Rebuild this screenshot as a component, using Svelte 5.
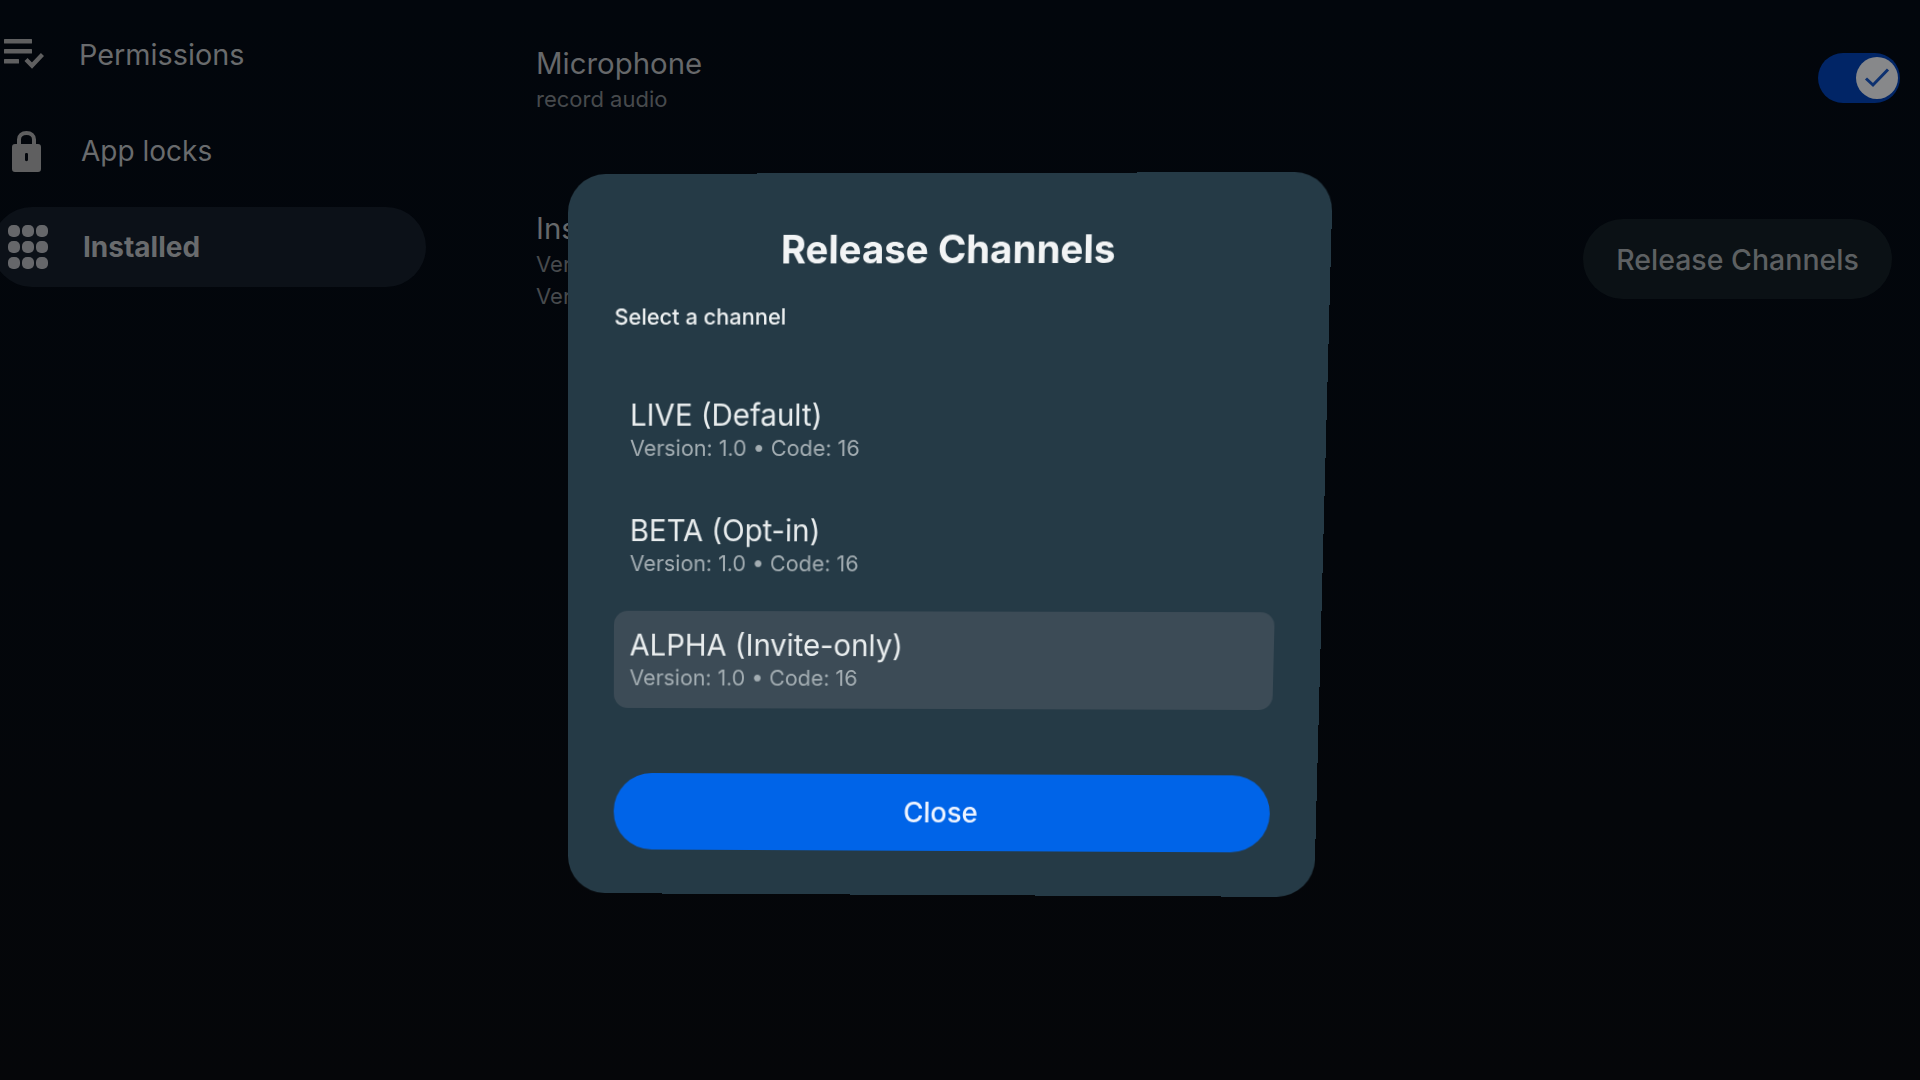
<script lang="ts">
	const navItems = [
		{ label: 'Permissions', icon: 'checklist' },
		{ label: 'App locks', icon: 'lock' },
		{ label: 'Installed', icon: 'grid', active: true }
	];

	const channels = [
		{ name: 'LIVE (Default)', version: '1.0', code: 16 },
		{ name: 'BETA (Opt-in)', version: '1.0', code: 16 },
		{ name: 'ALPHA (Invite-only)', version: '1.0', code: 16, selected: true }
	];

	// the dialog is a bit keystoned in the capture, so map its box onto the measured corners
	function warp(w: number, h: number, [p0, p1, p2, p3]: number[][]) {
		const dx1 = p1[0] - p2[0], dx2 = p3[0] - p2[0], dx3 = p0[0] - p1[0] + p2[0] - p3[0];
		const dy1 = p1[1] - p2[1], dy2 = p3[1] - p2[1], dy3 = p0[1] - p1[1] + p2[1] - p3[1];
		const det = dx1 * dy2 - dx2 * dy1;
		const g = (dx3 * dy2 - dx2 * dy3) / det;
		const k = (dx1 * dy3 - dx3 * dy1) / det;
		const a = p1[0] - p0[0] + g * p1[0];
		const b = p3[0] - p0[0] + k * p3[0];
		const d = p1[1] - p0[1] + g * p1[1];
		const e = p3[1] - p0[1] + k * p3[1];
		return `matrix3d(${a / w},${d / w},0,${g / w},${b / h},${e / h},0,${k / h},0,0,1,0,${p0[0]},${p0[1]},0,1)`;
	}

	const dialogTransform = warp(764, 720, [[0, 1], [765, -1], [746, 724], [0, 720]]);
</script>

<div class="page">
	<nav class="sidebar">
		{#each navItems as item}
			<div class="nav-item" class:active={item.active}>
				<span class="nav-icon">
					{#if item.icon === 'checklist'}
						<svg width="44" height="32" viewBox="0 0 44 32" fill="none">
							<g fill="#5f5f60">
								<rect x="4" y="1" width="28" height="4.5" rx="0.5" />
								<rect x="4" y="11" width="28" height="4.5" rx="0.5" />
								<rect x="4" y="21" width="15" height="4.5" rx="0.5" />
							</g>
							<path d="M26 21.5 L32 27.5 L42.5 16.5" stroke="#5f5f60" stroke-width="4.4" />
						</svg>
					{:else if item.icon === 'lock'}
						<svg class="lock" width="44" height="46" viewBox="0 0 44 46" fill="none">
							<path d="M19 18 V12.5 C19 8.5 22 6 26.5 6 C31 6 34 8.5 34 12.5 V18" stroke="#5f5f60" stroke-width="4" />
							<path fill="#5f5f60" fill-rule="evenodd" d="M15 17 H38 C40 17 41 18 41 20 V42 C41 44 40 45 38 45 H15 C13 45 12 44 12 42 V20 C12 18 13 17 15 17 Z M25 27 V33 C25 34.5 28 34.5 28 33 V27 C28 25.5 25 25.5 25 27 Z" />
						</svg>
					{:else}
						<div class="dots">
							{#each Array(9) as _}
								<span></span>
							{/each}
						</div>
					{/if}
				</span>
				<span class="nav-label">{item.label}</span>
			</div>
		{/each}
	</nav>

	<main class="content">
		<section class="row mic">
			<div>
				<div class="row-title">Microphone</div>
				<div class="row-sub">record audio</div>
			</div>
			<div class="toggle">
				<span class="knob">
					<svg width="28" height="24" viewBox="0 0 28 24" fill="none">
						<path d="M3 12.5 L10 19 L25 3.5" stroke="#0d3170" stroke-width="3" />
					</svg>
				</span>
			</div>
		</section>

		<section class="row installed">
			<div>
				<div class="row-title">Installed</div>
				<div class="row-sub">Version: 1.0</div>
				<div class="row-sub">Version code: 16</div>
			</div>
			<button type="button" class="channels-btn">Release Channels</button>
		</section>
	</main>
</div>

<div class="overlay">
	<div class="dialog" style="transform: {dialogTransform}">
		<h2 class="dialog-title">Release Channels</h2>
		<p class="dialog-hint">Select a channel</p>
		<ul class="channel-list">
			{#each channels as channel}
				<li class="channel" class:selected={channel.selected}>
					<div class="channel-name">{channel.name}</div>
					<div class="channel-meta">Version: {channel.version} • Code: {channel.code}</div>
				</li>
			{/each}
		</ul>
		<button type="button" class="close-btn">Close</button>
	</div>
</div>

<style>
	:global(body) {
		background: #03060b;
		overflow: hidden;
	}

	.page {
		display: flex;
		width: 1920px;
		height: 1080px;
		background: linear-gradient(180deg, #02060c 0%, #03060b 50%, #050609 100%);
		color: #67696b;
		font-family: Inter, "Noto Sans", sans-serif;
	}

	.sidebar {
		width: 426px;
		flex-shrink: 0;
		display: flex;
		flex-direction: column;
		gap: 16px;
		padding-top: 14px;
	}

	.nav-item {
		display: flex;
		align-items: center;
		height: 80px;
		font-size: 28.8px;
		color: #696b6d;
	}

	.nav-item:first-child {
		margin-bottom: 2px;
	}

	.nav-item:nth-child(2) {
		font-size: 28px;
		margin-top: -1px;
	}

	.nav-item.active {
		margin-left: -8px;
		padding-left: 8px;
		background: #0c1118;
		border-radius: 40px;
		font-size: 28px;
		font-weight: 700;
	}

	.nav-icon {
		width: 79px;
		display: flex;
		flex-shrink: 0;
	}

	.nav-item:nth-child(2) .nav-icon {
		width: 81px;
	}

	.nav-item.active .nav-icon {
		width: 83px;
	}

	.lock {
		margin-top: -2px;
	}

	.dots {
		display: grid;
		grid-template-columns: repeat(3, 12px);
		gap: 4px 2px;
		margin-left: 8px;
	}

	.dots span {
		height: 12px;
		border-radius: 5px;
		background: #66676a;
	}

	.content {
		flex: 1;
		padding: 45px 28px 0 110px;
	}

	.row {
		display: flex;
		justify-content: space-between;
	}

	.row.mic {
		align-items: flex-start;
		height: 165px;
	}

	.row.installed {
		align-items: flex-start;
	}

	.row-title {
		font-size: 29.4px;
		line-height: 38px;
		color: #66686a;
	}

	.row-sub {
		font-size: 22px;
		line-height: 32px;
		color: #474a4d;
	}

	.toggle {
		width: 82px;
		height: 50px;
		margin-top: 8px;
		margin-right: -8px;
		border-radius: 25px;
		background: #012566;
		display: flex;
		justify-content: flex-end;
		align-items: center;
		padding-right: 2px;
		box-sizing: border-box;
	}

	.knob {
		width: 42px;
		height: 42px;
		border-radius: 50%;
		background: #87888a;
		display: grid;
		place-items: center;
	}

	.channels-btn {
		width: 309px;
		height: 80px;
		margin-top: 9px;
		border: 0;
		border-radius: 40px;
		background: #0b1115;
		color: #5d6062;
		font: 500 28.5px Inter, "Noto Sans", sans-serif;
	}

	.overlay {
		position: fixed;
		inset: 0;
		padding: 173px 0 0 568px;
		font-family: Inter, "Noto Sans", sans-serif;
	}

	.dialog {
		width: 764px;
		height: 720px;
		box-sizing: border-box;
		padding: 50px 47px 0;
		background: #253a46;
		border-radius: 38px;
		transform-origin: 0 0;
		display: flex;
		flex-direction: column;
	}

	.dialog-title {
		margin: 0;
		text-align: center;
		font-size: 38.5px;
		line-height: 48px;
		font-weight: 700;
		color: #f2f4f5;
	}

	.dialog-hint {
		margin: 28px 0 0;
		font-size: 22px;
		line-height: 28px;
		font-weight: 500;
		color: #eef1f2;
	}

	.channel-list {
		list-style: none;
		margin: 49px 0 0;
		padding: 0;
		display: flex;
		flex-direction: column;
		gap: 17px;
	}

	.channel {
		height: 98px;
		box-sizing: border-box;
		padding: 16px 16px 0;
		border-radius: 14px;
	}

	.channel.selected {
		background: #3c4b56;
	}

	.channel-name {
		font-size: 29.8px;
		line-height: 36px;
		color: #e9edee;
	}

	.channel-meta {
		margin-top: 1px;
		font-size: 21.8px;
		line-height: 28px;
		color: #a3adb2;
	}

	.close-btn {
		height: 78px;
		margin-top: 66px;
		border: 0;
		border-radius: 40px;
		background: #0064e8;
		color: #eef4ff;
		font: 500 28px Inter, "Noto Sans", sans-serif;
	}
</style>
